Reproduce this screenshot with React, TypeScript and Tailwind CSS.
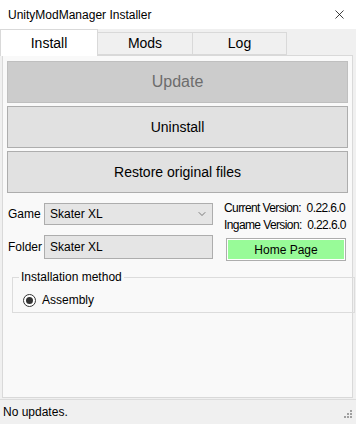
import { X, ChevronDown } from 'lucide-react';

export default function App() {
  return (
    <div
      className="w-[356px] h-[424px] flex flex-col bg-[#f0f0f0] text-black overflow-hidden"
      style={{ fontFamily: '"Liberation Sans", Arial, sans-serif' }}
    >
      {/* Title bar */}
      <div className="h-[29px] bg-white flex items-center justify-between pl-[8px] pr-[9px] shrink-0">
        <span className="text-[12px]">UnityModManager Installer</span>
        <X className="w-[15px] h-[15px]" strokeWidth={1.2} />
      </div>

      <div className="bg-[#f0f0f0] px-[2px] pt-0 flex-1 flex flex-col">
        {/* Tabs */}
        <div className="flex items-end h-[26px] relative z-10">
          <div className="w-[98px] h-[27px] bg-white border border-[#d9d9d9] border-b-0 flex items-center justify-center text-[14px] -mb-px ml-[-2px]">
            Install
          </div>
          <div className="w-[95px] h-[23px] bg-[#f0f0f0] border border-[#d9d9d9] border-l-0 flex items-center justify-center text-[14px]">
            Mods
          </div>
          <div className="w-[94px] h-[23px] bg-[#f0f0f0] border border-[#d9d9d9] border-l-0 flex items-center justify-center text-[14px]">
            Log
          </div>
        </div>

        {/* Tab page */}
        <div className="w-[351px] h-[343px] bg-[#f9f9f9] border border-[#d9d9d9] flex flex-col pt-[5px] px-[4px]">
          <div className="flex flex-col gap-[3px]">
            <button className="h-[42px] bg-[#cccccc] border border-[#bfbfbf] text-[#6d6d6d] text-[16px]">
              Update
            </button>
            <button className="h-[42px] bg-[#e1e1e1] border border-[#adadad] text-[14px]">
              Uninstall
            </button>
            <button className="h-[42px] bg-[#e1e1e1] border border-[#adadad] text-[14px]">
              Restore original files
            </button>
          </div>

          <div className="flex mt-[10px]">
            <div className="flex flex-col gap-[10px] shrink-0">
              <div className="flex items-center">
                <span className="w-[37px] pl-[1px] text-[12px]">Game</span>
                <div className="w-[169px] h-[22px] bg-[#e5e5e5] border border-[#adadad] flex items-center justify-between pl-[5px] pr-[4px] text-[12px]">
                  <span>Skater XL</span>
                  <ChevronDown className="w-[12px] h-[12px] text-[#404040]" strokeWidth={1.3} />
                </div>
              </div>
              <div className="flex items-center">
                <span className="w-[37px] pl-[1px] text-[12px]">Folder</span>
                <div className="w-[169px] h-[24px] bg-[#e5e5e5] border border-[#adadad] flex items-center pl-[5px] text-[12px]">
                  Skater XL
                </div>
              </div>
            </div>

            <div className="flex flex-col ml-[11px] -mt-[3px] whitespace-nowrap">
              <div className="text-[12px] leading-[17px] tracking-[-0.6px]">Current Version:&nbsp; 0.22.6.0</div>
              <div className="text-[12px] leading-[17px] tracking-[-0.6px]">Ingame Version:&nbsp; 0.22.6.0</div>
              <div className="mt-[4px] ml-[2px] w-[120px] h-[23px] border border-[#adadad] bg-white p-[1px]">
                <div className="w-full h-full bg-[#98fb98] flex items-center justify-center text-[12px]">
                  Home Page
                </div>
              </div>
            </div>
          </div>

          <div className="relative mt-[16px] ml-[5px] w-[343px] h-[36px] border border-[#dcdcdc]">
            <span className="absolute -top-[9px] left-[6px] bg-[#f9f9f9] px-[2px] text-[12px] leading-[16px]">
              Installation method
            </span>
            <div className="flex items-center gap-[6px] pl-[10px] pt-[13px]">
              <div className="w-[13px] h-[13px] rounded-full border border-[#333333] bg-white flex items-center justify-center">
                <div className="w-[7px] h-[7px] rounded-full bg-[#333333]" />
              </div>
              <span className="text-[12px]">Assembly</span>
            </div>
          </div>
        </div>

        {/* Status bar */}
        <div className="mt-auto h-[25px] -mx-[2px] border-t border-[#dcdcdc] flex items-center justify-between pl-[3px] pr-[3px]">
          <span className="text-[12px]">No updates.</span>
          <svg width="12" height="12" viewBox="0 0 12 12" className="self-end mb-[3px]">
            <rect x="9" y="1" width="2" height="2" fill="#a0a0a0" />
            <rect x="6" y="4" width="2" height="2" fill="#a0a0a0" />
            <rect x="9" y="4" width="2" height="2" fill="#a0a0a0" />
            <rect x="3" y="7" width="2" height="2" fill="#a0a0a0" />
            <rect x="6" y="7" width="2" height="2" fill="#a0a0a0" />
            <rect x="9" y="7" width="2" height="2" fill="#a0a0a0" />
          </svg>
        </div>
      </div>
    </div>
  );
}
